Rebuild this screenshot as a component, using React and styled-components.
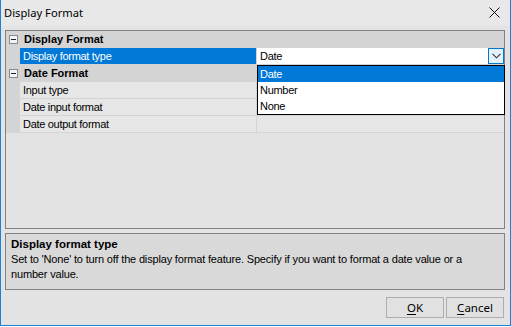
import React from "react";
import styled, { createGlobalStyle } from "styled-components";

const Global = createGlobalStyle`
  html, body { margin: 0; padding: 0; background: #ffffff; }
  * { box-sizing: border-box; }
`;

const Window = styled.div`
  width: 511px;
  height: 326px;
  border: 1px solid #1883d7;
  border-top: none;
  background: #e3e3e3;
  display: flex;
  flex-direction: column;
  font-family: "Liberation Sans", Arial, sans-serif;
  font-size: 11px;
  color: #000;
`;

const TitleBar = styled.div`
  height: 26px;
  flex: none;
  display: flex;
  align-items: center;
  justify-content: space-between;
  padding: 0 10px 2px 3px;
  background: #e8e8e8;
  font-family: "Noto Sans", "Open Sans", sans-serif;
  font-size: 11.2px;
`;

const Body = styled.div`
  flex: 1;
  display: flex;
  flex-direction: column;
  padding: 4px 5px 0 4px;
`;

const Grid = styled.div`
  position: relative;
  height: 199px;
  flex: none;
  border: 1px solid #828282;
  background: #e3e3e3;
  display: flex;
  flex-direction: column;
`;

const CategoryRow = styled.div`
  height: 17px;
  display: flex;
  align-items: center;
  background: #d4d4d4;
  font-weight: bold;
  padding-left: 3px;
  border-bottom: 1px solid #d4d4d4;
`;

const Minus = styled.span`
  width: 9px;
  height: 9px;
  border: 1px solid #8a8a8a;
  background: #f4f4f4;
  margin-right: 6px;
  position: relative;
  &::after {
    content: "";
    position: absolute;
    left: 1px;
    right: 1px;
    top: 3px;
    height: 1px;
    background: #222;
  }
`;

const PropRow = styled.div`
  height: 17px;
  display: flex;
  border-bottom: 1px solid #d4d4d4;
  background: #d4d4d4;
  letter-spacing: -0.3px;
`;

const Gutter = styled.div`
  width: 14px;
  flex: none;
`;

const Label = styled.div`
  width: 236px;
  flex: none;
  padding-left: 3px;
  display: flex;
  align-items: center;
  background: ${(p) => (p.$selected ? "#0078d7" : "#e6e6e6")};
  color: ${(p) => (p.$selected ? "#fff" : "#000")};
`;

const Divider = styled.div`
  width: 1px;
  flex: none;
`;

const Value = styled.div`
  flex: 1;
  display: flex;
  align-items: center;
  justify-content: space-between;
  padding-left: 3px;
  background: ${(p) => (p.$active ? "#ffffff" : "#e6e6e6")};
`;

const DropButton = styled.div`
  width: 16px;
  height: 16px;
  border: 1px solid #0078d7;
  background: #e5f1fb;
  display: flex;
  align-items: center;
  justify-content: center;
`;

const DropList = styled.div`
  position: absolute;
  left: 251px;
  top: 34px;
  width: 248px;
  height: 50px;
  border: 1px solid #000;
  background: #fff;
  letter-spacing: -0.3px;
`;

const Option = styled.div`
  height: 16px;
  display: flex;
  align-items: center;
  padding-left: 2px;
  background: ${(p) => (p.$selected ? "#0078d7" : "transparent")};
  color: ${(p) => (p.$selected ? "#fff" : "#000")};
`;

const Help = styled.div`
  margin-top: 4px;
  height: 57px;
  flex: none;
  border: 1px solid #828282;
  background: #d9d9d9;
  padding: 3px 5px;
`;

const HelpTitle = styled.div`
  font-weight: bold;
  font-size: 11.5px;
  line-height: 14px;
`;

const HelpText = styled.div`
  margin-top: 1px;
  line-height: 15px;
  letter-spacing: -0.17px;
`;

const ButtonRow = styled.div`
  margin-top: 7px;
  display: flex;
  justify-content: flex-end;
  gap: 2px;
  padding-right: 1px;
`;

const Button = styled.button`
  width: 58px;
  height: 21px;
  border: 1px solid #adadad;
  background: #e1e1e1;
  font-family: "Noto Sans", "Open Sans", sans-serif;
  font-size: 11.5px;
  color: #000;
  padding: 0;
  & u { text-decoration-thickness: 1px; text-underline-offset: 2px; }
`;

const CloseIcon = () => (
  <svg width="11" height="11" viewBox="0 0 11 11">
    <path d="M0.5 0.5 L10.5 10.5 M10.5 0.5 L0.5 10.5" stroke="#111" strokeWidth="1" fill="none" />
  </svg>
);

const Chevron = () => (
  <svg width="9" height="6" viewBox="0 0 9 6">
    <path d="M0.5 0.8 L4.5 4.8 L8.5 0.8" stroke="#333" strokeWidth="1.1" fill="none" />
  </svg>
);

export default function App() {
  return (
    <>
      <Global />
      <Window>
        <TitleBar>
          <span>Display Format</span>
          <CloseIcon />
        </TitleBar>
        <Body>
          <Grid>
            <CategoryRow>
              <Minus />
              Display Format
            </CategoryRow>
            <PropRow>
              <Gutter />
              <Label $selected>Display format type</Label>
              <Divider />
              <Value $active>
                Date
                <DropButton>
                  <Chevron />
                </DropButton>
              </Value>
            </PropRow>
            <CategoryRow>
              <Minus />
              Date Format
            </CategoryRow>
            <PropRow>
              <Gutter />
              <Label>Input type</Label>
              <Divider />
              <Value />
            </PropRow>
            <PropRow>
              <Gutter />
              <Label>Date input format</Label>
              <Divider />
              <Value />
            </PropRow>
            <PropRow>
              <Gutter />
              <Label>Date output format</Label>
              <Divider />
              <Value />
            </PropRow>
            <DropList>
              <Option $selected>Date</Option>
              <Option>Number</Option>
              <Option>None</Option>
            </DropList>
          </Grid>
          <Help>
            <HelpTitle>Display format type</HelpTitle>
            <HelpText>
              Set to 'None' to turn off the display format feature. Specify if you want to format a date value or a
              <br />
              number value.
            </HelpText>
          </Help>
          <ButtonRow>
            <Button>
              <u>O</u>K
            </Button>
            <Button>
              <u>C</u>ancel
            </Button>
          </ButtonRow>
        </Body>
      </Window>
    </>
  );
}
